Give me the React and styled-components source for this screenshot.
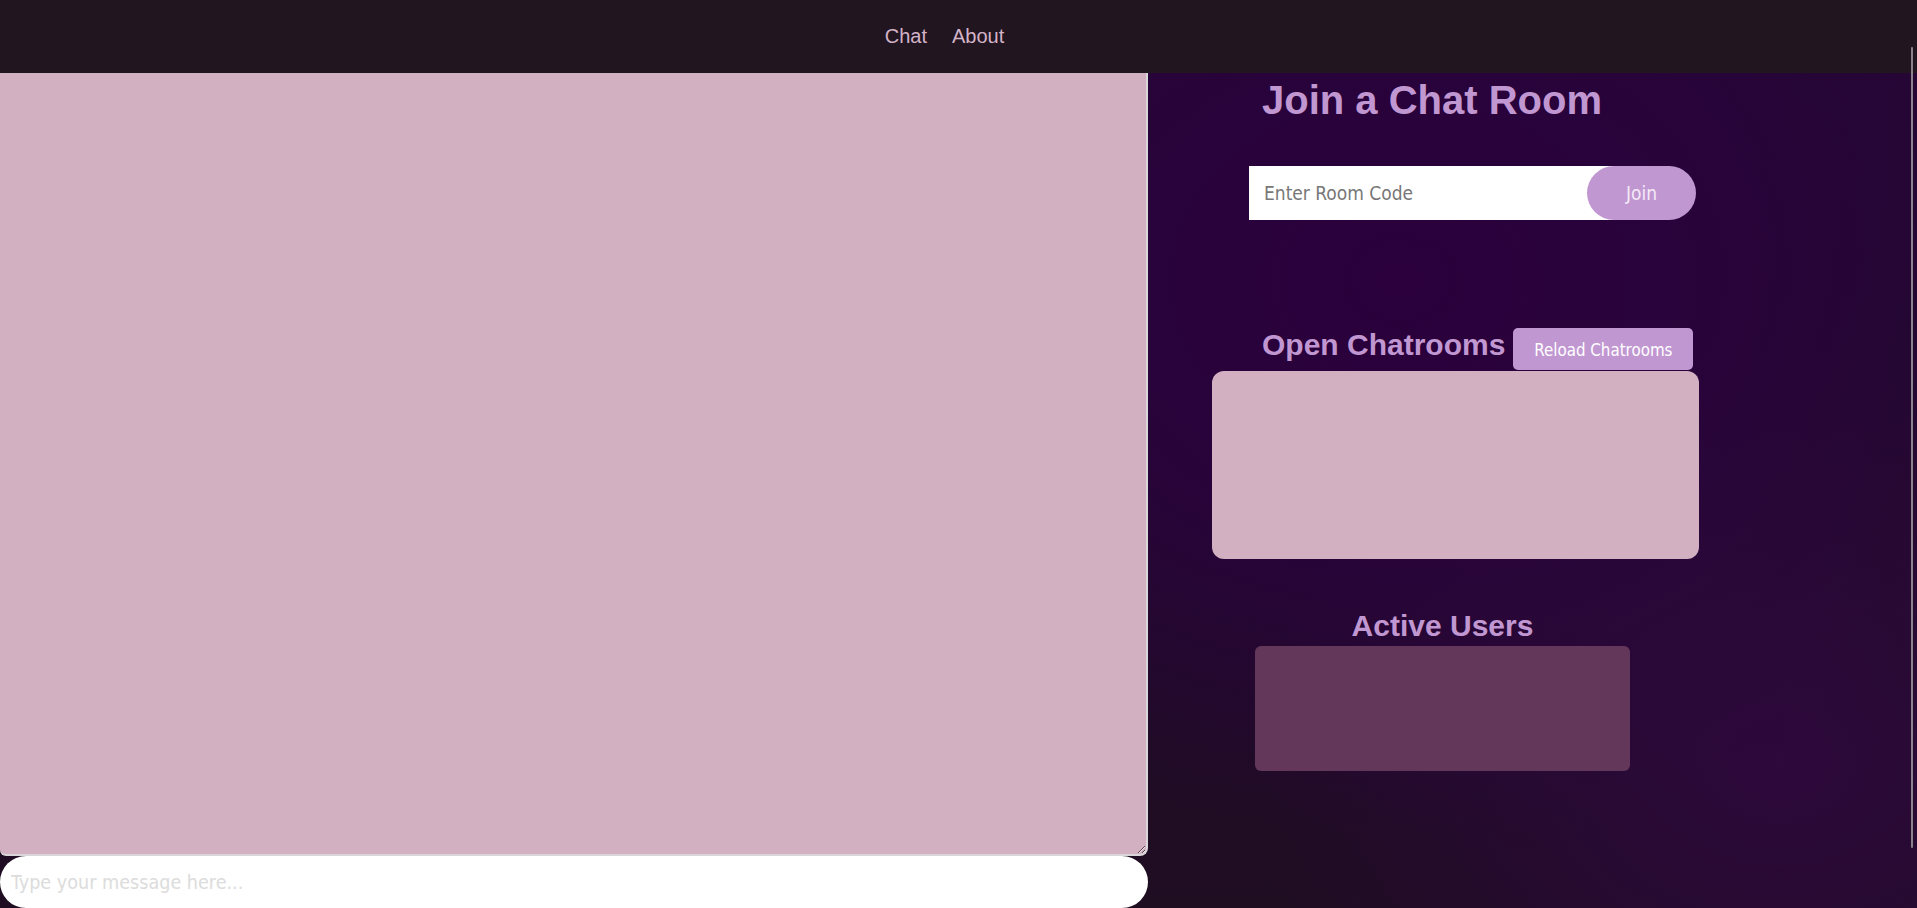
import React from 'react';
import styled, { createGlobalStyle } from 'styled-components';

const GlobalStyle = createGlobalStyle`
  html, body {
    margin: 0;
    padding: 0;
    height: 100%;
    overflow: hidden;
  }
  body {
    background: #21131f;
    font-family: "Liberation Sans", Arial, sans-serif;
  }
  * {
    box-sizing: border-box;
  }
`;

const Page = styled.div`
  width: 1917px;
  height: 908px;
  display: flex;
  flex-direction: column;
  background:
    radial-gradient(ellipse 520px 420px at 1780px 760px, rgba(46, 8, 62, 0.9) 0%, rgba(46, 8, 62, 0) 100%),
    radial-gradient(ellipse 700px 560px at 1400px 280px, #2b003c 0%, #28033a 45%, rgba(33, 10, 38, 0) 100%),
    linear-gradient(180deg, #230734 0%, #200b27 60%, #1f0d22 100%);
`;

const Header = styled.header`
  height: 73px;
  flex: none;
  background: #211520;
  display: flex;
  align-items: center;
  justify-content: center;
  gap: 25px;
  padding-right: 28px;
`;

const NavLink = styled.a`
  color: #d4b3c8;
  font-family: "Liberation Sans", Arial, sans-serif;
  font-size: 20px;
  text-decoration: none;
  cursor: pointer;
`;

const Main = styled.main`
  flex: 1;
  display: flex;
  min-height: 0;
`;

const ChatColumn = styled.section`
  width: 1148px;
  flex: none;
  display: flex;
  flex-direction: column;
`;

const ChatLog = styled.textarea`
  height: 783px;
  width: 100%;
  margin: 0;
  display: block;
  background: #d3b0c1;
  border: 2px solid #d9d6d9;
  border-top: none;
  border-left: none;
  border-radius: 0 0 8px 6px;
  outline: none;
  resize: both;
`;

const MessageInput = styled.input`
  height: 52px;
  width: 100%;
  margin: 0;
  border: none;
  outline: none;
  border-radius: 26px;
  background: #ffffff;
  padding: 0 11px;
  font-family: "DejaVu Sans Condensed", "Liberation Sans", sans-serif;
  font-size: 19.6px;
  &::placeholder {
    color: #dcdcdc;
  }
`;

const SidePanel = styled.aside`
  flex: 1;
  display: flex;
  flex-direction: column;
  align-items: flex-start;
  padding-top: 5px;
`;

const Title = styled.h1`
  margin: 0 0 0 114px;
  font-family: "Liberation Sans", Arial, sans-serif;
  font-weight: bold;
  font-size: 40px;
  line-height: 45px;
  color: #c197d2;
`;

const JoinRow = styled.div`
  margin: 43px 0 0 101px;
  display: flex;
  align-items: center;
`;

const CodeInput = styled.input`
  width: 380px;
  height: 54px;
  border: none;
  outline: none;
  background: #ffffff;
  padding: 0 15px;
  font-family: "DejaVu Sans Condensed", "Liberation Sans", sans-serif;
  font-size: 19px;
  color: #333;
  &::placeholder {
    color: #777777;
  }
`;

const PillButton = styled.button`
  width: 109px;
  height: 54px;
  margin-left: -42px;
  border: none;
  border-radius: 27px;
  background: #c197d2;
  color: #f4eaf7;
  font-family: "DejaVu Sans Condensed", "Liberation Sans", sans-serif;
  font-size: 19px;
  cursor: pointer;
`;

const ListHeader = styled.div`
  margin: 108px 0 0 114px;
  display: flex;
  align-items: flex-start;
  gap: 8px;
`;

const SubTitle = styled.h2`
  margin: 0;
  font-family: "Liberation Sans", Arial, sans-serif;
  font-weight: bold;
  font-size: 30px;
  line-height: 34px;
  color: #c197d2;
  text-align: ${(p) => (p.$center ? 'center' : 'left')};
  width: ${(p) => (p.$width ? `${p.$width}px` : 'auto')};
  margin-left: ${(p) => (p.$offset ? `${p.$offset}px` : '0')};
  margin-top: ${(p) => (p.$top ? `${p.$top}px` : '0')};
`;

const ReloadButton = styled.button`
  width: 180px;
  height: 42px;
  border: none;
  border-radius: 5px;
  background: #c197d2;
  color: #ffffff;
  font-family: "DejaVu Sans Condensed", "Liberation Sans", sans-serif;
  font-size: 16.8px;
  padding: 0;
  padding-top: 2px;
  cursor: pointer;
`;

const RoomList = styled.div`
  margin: 1px 0 0 64px;
  width: 487px;
  height: 188px;
  border-radius: 12px;
  background: #d3b0c1;
`;

const UserList = styled.div`
  margin: 3px 0 0 107px;
  width: 375px;
  height: 125px;
  border-radius: 6px;
  background: #62375a;
`;

const ScrollThumb = styled.div`
  position: fixed;
  top: 47px;
  right: 4px;
  width: 2px;
  height: 801px;
  background: #8b838b;
  border-radius: 1px;
`;

export default function App() {
  return (
    <>
      <GlobalStyle />
      <Page>
        <Header>
          <NavLink>Chat</NavLink>
          <NavLink>About</NavLink>
        </Header>
        <Main>
          <ChatColumn>
            <ChatLog readOnly />
            <MessageInput placeholder="Type your message here..." />
          </ChatColumn>
          <SidePanel>
            <Title>Join a Chat Room</Title>
            <JoinRow>
              <CodeInput placeholder="Enter Room Code" />
              <PillButton>Join</PillButton>
            </JoinRow>
            <ListHeader>
              <SubTitle>Open Chatrooms</SubTitle>
              <ReloadButton>Reload Chatrooms</ReloadButton>
            </ListHeader>
            <RoomList />
            <SubTitle $center $width={375} $offset={107} $top={50}>
              Active Users
            </SubTitle>
            <UserList />
          </SidePanel>
        </Main>
        <ScrollThumb />
      </Page>
    </>
  );
}
